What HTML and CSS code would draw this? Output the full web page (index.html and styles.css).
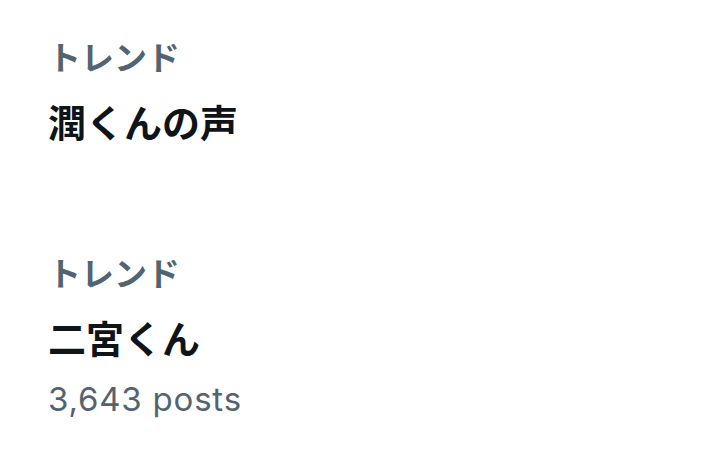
FILE: index.html
```html
<!DOCTYPE html>
<html lang="ja">
<head>
    <meta charset="UTF-8">
    <title>トレンド</title>
    <link rel="stylesheet" href="styles.css">
</head>
<body>

<!--トレンド一覧-->
<div class="trends">

    <!--トレンド 1-->
    <div class="trend">
        <div class="trend-label">トレンド</div>
        <div class="trend-title">潤くんの声</div>
    </div>

    <!--トレンド 2-->
    <div class="trend">
        <div class="trend-label">トレンド</div>
        <div class="trend-title">二宮くん</div>
        <div class="trend-count">3,643 posts</div>
    </div>

</div>

</body>
</html>
```

FILE: styles.css
```css
/*去除默认样式*/
* {
    margin: 0;
    padding: 0;
}

body {
    background-color: #fff;
    font-family: "Inter", "Noto Sans CJK JP", sans-serif;
}

/*トレンド一覧*/
.trends {
    display: flex;
    flex-direction: column;
}

.trend {
    padding: 38px 48px 30px;
    display: flex;
    flex-direction: column;
}

.trend + .trend {
    padding-top: 76px;
}

/*カテゴリ*/
.trend-label {
    color: #536471;
    font-size: 33px;
    line-height: 40px;
    font-weight: 700;
}

/*タイトル*/
.trend-title {
    color: #0f1419;
    font-size: 38px;
    line-height: 50px;
    font-weight: 700;
    padding-top: 20px;
}

/*件数*/
.trend-count {
    color: #536471;
    font-size: 33px;
    line-height: 40px;
    letter-spacing: 0.8px;
    margin-top: 15px;
}
```
